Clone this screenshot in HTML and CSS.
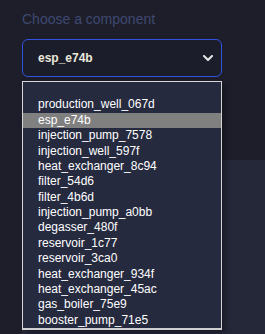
FILE: index.html
```html
<!DOCTYPE html>
<html lang="en">
<head>
  <meta charset="UTF-8">
  <meta name="viewport" content="width=device-width, initial-scale=1.0">
  <title>Choose a component</title>
  <link rel="stylesheet" href="styles.css">
</head>
<body>
  <div class="page">
    <div class="field">
      <label class="field-label">Choose a component</label>
      <div class="select-box">
        <span class="select-value">esp_e74b</span>
        <svg class="chevron" width="10" height="6" viewBox="0 0 10 6">
          <path d="M1 1 L5 5 L9 1" fill="none" stroke="#e6e6e6" stroke-width="2" stroke-linecap="round" stroke-linejoin="round"/>
        </svg>
      </div>
      <ul class="dropdown">
        <li class="option"></li>
        <li class="option">production_well_067d</li>
        <li class="option selected">esp_e74b</li>
        <li class="option">injection_pump_7578</li>
        <li class="option">injection_well_597f</li>
        <li class="option">heat_exchanger_8c94</li>
        <li class="option">filter_54d6</li>
        <li class="option">filter_4b6d</li>
        <li class="option">injection_pump_a0bb</li>
        <li class="option">degasser_480f</li>
        <li class="option">reservoir_1c77</li>
        <li class="option">reservoir_3ca0</li>
        <li class="option">heat_exchanger_934f</li>
        <li class="option">heat_exchanger_45ac</li>
        <li class="option">gas_boiler_75e9</li>
        <li class="option">booster_pump_71e5</li>
      </ul>
    </div>
    <div class="card"></div>
  </div>
</body>
</html>
```

FILE: styles.css
```css
body {
  margin: 0;
  background-color: #1e1e2b;
  font-family: "Liberation Sans", Arial, sans-serif;
  overflow: hidden;
}

.page {
  padding: 11px 0 0 22px;
  height: 323px;
  display: flex;
  flex-direction: column;
}

.field {
  position: relative;
  width: 200px;
}

.field-label {
  display: block;
  font-size: 14px;
  line-height: 16px;
  color: #3d4970;
  margin-bottom: 12px;
}

.select-box {
  height: 36px;
  border: 1px solid #2f55e0;
  border-radius: 6px;
  display: flex;
  align-items: center;
  justify-content: space-between;
  padding: 0 8px 0 15px;
  background-color: #1c1d2a;
}

.select-value {
  font-size: 12px;
  font-weight: 600;
  color: #ebe8dc;
}

.chevron {
  display: block;
}

.dropdown {
  position: absolute;
  top: 70px;
  left: 0;
  width: 198px;
  margin: 0;
  padding: 0;
  list-style: none;
  background-color: #262a3f;
  border: 1px solid #d6d6d6;
  border-bottom: 2px solid #cfcfcf;
  box-shadow: 3px 3px 6px rgba(0, 0, 0, 0.35);
  z-index: 2;
}

.option {
  height: 15.38px;
  line-height: 15.38px;
  padding-left: 15px;
  font-size: 12px;
  color: #ffffff;
  white-space: nowrap;
}

.option.selected {
  background-color: #808080;
}

.card {
  margin-top: 83px;
  flex: 1;
  background-color: #252839;
}
```
